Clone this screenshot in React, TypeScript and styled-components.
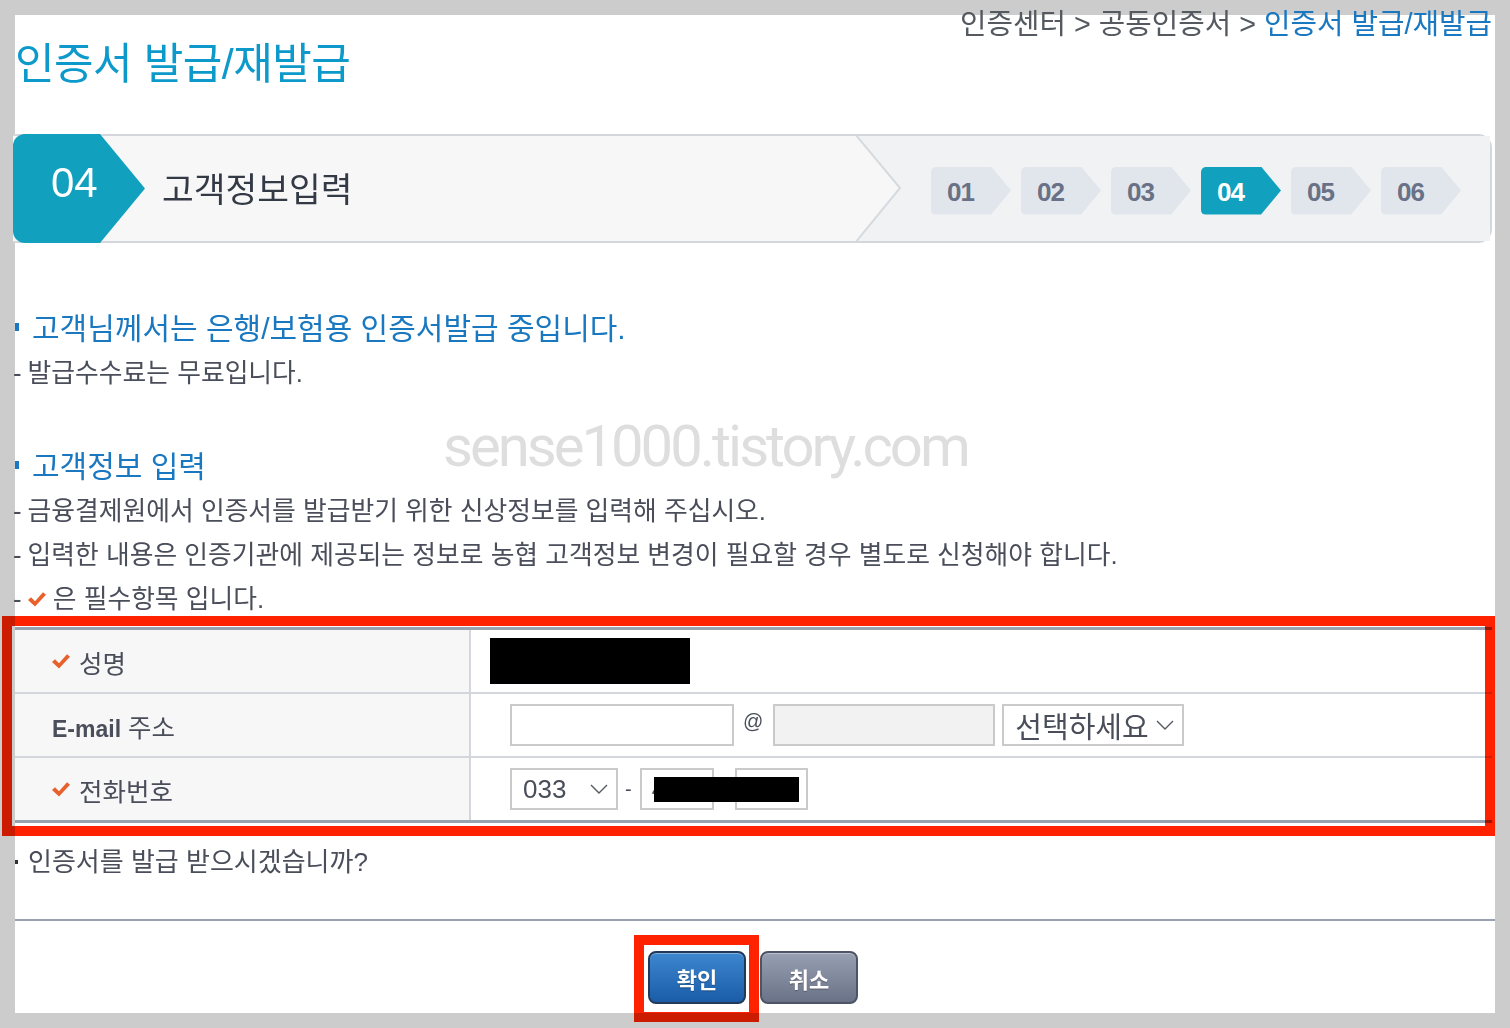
import React from 'react';
import styled, { createGlobalStyle } from 'styled-components';

const GlobalStyle = createGlobalStyle`
  html, body {
    margin: 0;
    padding: 0;
  }
  body {
    background: #cccccc;
    font-family: "Liberation Sans", "Noto Sans CJK KR", sans-serif;
    color: #4a4e5a;
  }
`;

const Page = styled.div`
  position: relative;
  width: 1510px;
  height: 1028px;
  padding: 15px;
  box-sizing: border-box;
  overflow: hidden;
`;

const Panel = styled.main`
  height: 998px;
  background: #ffffff;
  display: flex;
  flex-direction: column;
`;

/* 상단 타이틀 + 경로 */
const Header = styled.header`
  display: flex;
  justify-content: space-between;
  align-items: flex-start;
  height: 119px;
  flex-shrink: 0;
`;

const Title = styled.h1`
  margin: 28px 0 0;
  font-size: 43px;
  font-weight: normal;
  line-height: 1;
  color: #0d9acb;
  letter-spacing: -0.5px;
`;

const Breadcrumb = styled.nav`
  margin: -5px 3px 0 0;
  font-size: 28.8px;
  line-height: 1;
  white-space: nowrap;
`;

const Crumb = styled.span<{ $current?: boolean }>`
  color: ${(p) => (p.$current ? '#1a78c0' : '#555a60')};
`;

/* 단계 표시 바 */
const StepBar = styled.section`
  display: flex;
  align-items: center;
  height: 105px;
  margin: 0 3px 0 -2px;
  background: #f7f7f7;
  border: 2px solid #d3d7dc;
  border-left: none;
  border-radius: 0 14px 14px 0;
  flex-shrink: 0;
`;

const Badge = styled.div`
  align-self: flex-start;
  width: 132px;
  height: 109px;
  margin-top: -2px;
  background: #11a0bd;
  border-radius: 12px 0 0 12px;
  clip-path: polygon(0 0, 87px 0, 132px 50%, 87px 100%, 0 100%);
  color: #ffffff;
  font-size: 42px;
  line-height: 1;
  padding: 28px 0 0 38px;
  box-sizing: border-box;
  flex-shrink: 0;
`;

const StepName = styled.div`
  flex: 1;
  padding: 4px 0 0 17px;
  font-size: 34.5px;
  color: #333a45;
  line-height: 1;
`;

const Steps = styled.div`
  position: relative;
  align-self: stretch;
  width: 635px;
  display: flex;
  align-items: center;
  gap: 10px;
  padding: 4px 0 0 76px;
  box-sizing: border-box;
  flex-shrink: 0;
`;

const StepsBg = styled.svg`
  position: absolute;
  left: 0;
  top: 0;
  width: 100%;
  height: 100%;
  z-index: 0;
`;

const Chip = styled.div<{ $active?: boolean }>`
  position: relative;
  z-index: 1;
  width: 80px;
  height: 48px;
  display: flex;
  align-items: center;
  padding: 3px 0 0 16px;
  box-sizing: border-box;
  border-radius: 5px 0 0 5px;
  clip-path: polygon(0 0, 60px 0, 80px 50%, 60px 100%, 0 100%);
  background: ${(p) => (p.$active ? '#11a0bd' : '#e1e5ec')};
  color: ${(p) => (p.$active ? '#ffffff' : '#687186')};
  font-size: 26px;
  font-weight: bold;
  letter-spacing: -1px;
`;

/* 안내 문구 */
const Section = styled.section<{ $top: number }>`
  margin-top: ${(p) => p.$top}px;
  flex-shrink: 0;
`;

const Heading = styled.h2`
  margin: 0;
  display: flex;
  align-items: center;
  font-size: 30px;
  font-weight: normal;
  line-height: 44px;
  color: #1a78c0;
  &::before {
    content: '';
    width: 4px;
    height: 8px;
    background: #1a78c0;
    margin-right: 13px;
    margin-top: -4px;
  }
`;

const Note = styled.p`
  margin: 0;
  display: flex;
  align-items: center;
  font-size: 25.8px;
  line-height: 44px;
  color: #4a4e5a;
  white-space: nowrap;
`;

const Dash = styled.span`
  margin-right: 6px;
  margin-left: -2px;
`;

const Check = () => (
  <svg width="18" height="15" viewBox="0 0 18 15">
    <polygon points="0,8 3,5.3 7,9.3 15,0.3 18,2.8 7,14.5" fill="#e8602c" />
  </svg>
);

/* 입력 표 */
const FormTable = styled.div`
  margin: 6px 3px 0 0;
  border-top: 3px solid #98a1ae;
  border-bottom: 3px solid #98a1ae;
  flex-shrink: 0;
`;

const Row = styled.div`
  display: grid;
  grid-template-columns: 456px 1fr;
  height: 62px;
  & + & {
    border-top: 2px solid #d3d7dc;
  }
`;

const Label = styled.div`
  display: flex;
  align-items: center;
  gap: 9px;
  padding-left: 37px;
  background: #f7f7f7;
  border-right: 2px solid #d3d7dc;
  font-size: 25.5px;
  color: #4a4e5a;
`;

const Strong = styled.b`
  font-weight: bold;
  font-size: 23px;
`;

const Value = styled.div<{ $indent: number }>`
  display: flex;
  align-items: center;
  padding-left: ${(p) => p.$indent}px;
`;

const Redacted = styled.div<{ $w: number; $h: number }>`
  width: ${(p) => p.$w}px;
  height: ${(p) => p.$h}px;
  background: #000000;
`;

const TextBox = styled.input<{ $w: number; $disabled?: boolean }>`
  width: ${(p) => p.$w}px;
  height: 42px;
  box-sizing: border-box;
  border: 2px solid #cacaca;
  background: ${(p) => (p.$disabled ? '#f2f2f2' : '#ffffff')};
  font-family: inherit;
  font-size: 26px;
  color: #555a60;
  padding: 0 10px;
  margin: 0;
  outline: none;
`;

const SelectBox = styled.div<{ $w: number; $gap?: number }>`
  width: ${(p) => p.$w}px;
  height: 42px;
  margin-left: ${(p) => p.$gap ?? 0}px;
  box-sizing: border-box;
  border: 2px solid #cacaca;
  display: flex;
  align-items: center;
  justify-content: space-between;
  padding: 0 8px 0 11px;
  font-size: 26px;
  color: #4a4e5a;
`;

const Korean = styled.span`
  font-size: 29px;
`;

const Chevron = () => (
  <svg width="18" height="10" viewBox="0 0 18 10">
    <polyline points="1,1 9,9 17,1" fill="none" stroke="#555a60" strokeWidth="1.4" />
  </svg>
);

const At = styled.span`
  font-size: 20px;
  color: #4a4e5a;
  margin: 0 10px 8px 9px;
`;

const Hyphen = styled.span`
  font-size: 20px;
  color: #4a4e5a;
  margin: 0 8px 0 7px;
`;

const Masked = styled.div`
  position: relative;
  display: flex;
  gap: 21px;
`;

const MaskBar = styled.div`
  position: absolute;
  left: 14px;
  top: 9px;
  width: 145px;
  height: 25px;
  background: #000000;
`;

/* 확인 질문 + 버튼 */
const Question = styled.p`
  margin: 17px 0 0;
  display: flex;
  align-items: center;
  font-size: 26px;
  line-height: 44px;
  color: #4a4e5a;
  flex-shrink: 0;
  &::before {
    content: '';
    width: 3px;
    height: 4px;
    background: #333333;
    margin-right: 10px;
  }
`;

const Divider = styled.hr`
  margin: 35px 0 0;
  border: none;
  height: 2px;
  background: #98a1ae;
  flex-shrink: 0;
`;

const Actions = styled.div`
  display: flex;
  justify-content: center;
  gap: 14px;
  margin-top: 30px;
  padding-right: 4px;
`;

const Button = styled.button<{ $primary?: boolean }>`
  width: 98px;
  height: 53px;
  border-radius: 8px;
  border: 2px solid ${(p) => (p.$primary ? '#22395a' : '#4d5465')};
  background: ${(p) =>
    p.$primary
      ? 'linear-gradient(#3d87cf, #1a5ca8)'
      : 'linear-gradient(#979fb2, #6a7287)'};
  box-shadow: inset 0 1px 0 rgba(255, 255, 255, 0.35);
  color: #ffffff;
  font-family: inherit;
  font-size: 22px;
  font-weight: bold;
  text-shadow: 0 1px 1px rgba(0, 0, 0, 0.3);
  padding: 0;
  cursor: pointer;
`;

/* 캡처 위에 얹힌 표시들 */
const Highlight = styled.div<{ $x: number; $y: number; $w: number; $h: number }>`
  position: absolute;
  left: ${(p) => p.$x}px;
  top: ${(p) => p.$y}px;
  width: ${(p) => p.$w}px;
  height: ${(p) => p.$h}px;
  box-sizing: border-box;
  border: 10px solid #ff2200;
  mix-blend-mode: multiply;
  pointer-events: none;
`;

const Watermark = styled.div`
  position: absolute;
  left: 443px;
  top: 417px;
  font-family: Roboto, "Noto Sans", sans-serif;
  font-size: 58px;
  line-height: 1;
  letter-spacing: -3px;
  color: #dedede;
  pointer-events: none;
`;

const steps = ['01', '02', '03', '04', '05', '06'];

export default function App() {
  return (
    <Page>
      <GlobalStyle />
      <Panel>
        <Header>
          <Title>인증서 발급/재발급</Title>
          <Breadcrumb>
            <Crumb>인증센터 &gt; 공동인증서 &gt; </Crumb>
            <Crumb $current>인증서 발급/재발급</Crumb>
          </Breadcrumb>
        </Header>

        <StepBar>
          <Badge>04</Badge>
          <StepName>고객정보입력</StepName>
          <Steps>
            <StepsBg viewBox="0 0 635 105" preserveAspectRatio="none">
              <polygon points="0,-2 635,-2 635,107 0,107 45,52" fill="#f1f2f4" />
              <polyline points="0,-2 45,52 0,107" fill="none" stroke="#d6dadf" strokeWidth="2" />
            </StepsBg>
            {steps.map((s) => (
              <Chip key={s} $active={s === '04'}>
                {s}
              </Chip>
            ))}
          </Steps>
        </StepBar>

        <Section $top={64}>
          <Heading>고객님께서는 은행/보험용 인증서발급 중입니다.</Heading>
          <Note>
            <Dash>-</Dash>발급수수료는 무료입니다.
          </Note>
        </Section>

        <Section $top={50}>
          <Heading>고객정보 입력</Heading>
          <Note>
            <Dash>-</Dash>금융결제원에서 인증서를 발급받기 위한 신상정보를 입력해 주십시오.
          </Note>
          <Note>
            <Dash>-</Dash>입력한 내용은 인증기관에 제공되는 정보로 농협 고객정보 변경이 필요할 경우 별도로 신청해야 합니다.
          </Note>
          <Note>
            <Dash>-</Dash>
            <Check />
            &nbsp;은 필수항목 입니다.
          </Note>
        </Section>

        <FormTable>
          <Row>
            <Label>
              <Check />
              성명
            </Label>
            <Value $indent={19}>
              <Redacted $w={200} $h={46} />
            </Value>
          </Row>
          <Row>
            <Label>
              <span>
                <Strong>E-mail</Strong> 주소
              </span>
            </Label>
            <Value $indent={39}>
              <TextBox $w={224} readOnly />
              <At>@</At>
              <TextBox $w={222} $disabled readOnly />
              <SelectBox $w={182} $gap={7}>
                <Korean>선택하세요</Korean>
                <Chevron />
              </SelectBox>
            </Value>
          </Row>
          <Row>
            <Label>
              <Check />
              전화번호
            </Label>
            <Value $indent={39}>
              <SelectBox $w={108}>
                033
                <Chevron />
              </SelectBox>
              <Hyphen>-</Hyphen>
              <Masked>
                <TextBox $w={74} readOnly value="4" />
                <TextBox $w={73} readOnly />
                <MaskBar />
              </Masked>
            </Value>
          </Row>
        </FormTable>

        <Question>인증서를 발급 받으시겠습니까?</Question>
        <Divider />
        <Actions>
          <Button $primary>확인</Button>
          <Button>취소</Button>
        </Actions>
      </Panel>

      <Watermark>sense1000.tistory.com</Watermark>
      <Highlight $x={2} $y={616} $w={1493} $h={220} />
      <Highlight $x={634} $y={935} $w={125} $h={87} />
    </Page>
  );
}
